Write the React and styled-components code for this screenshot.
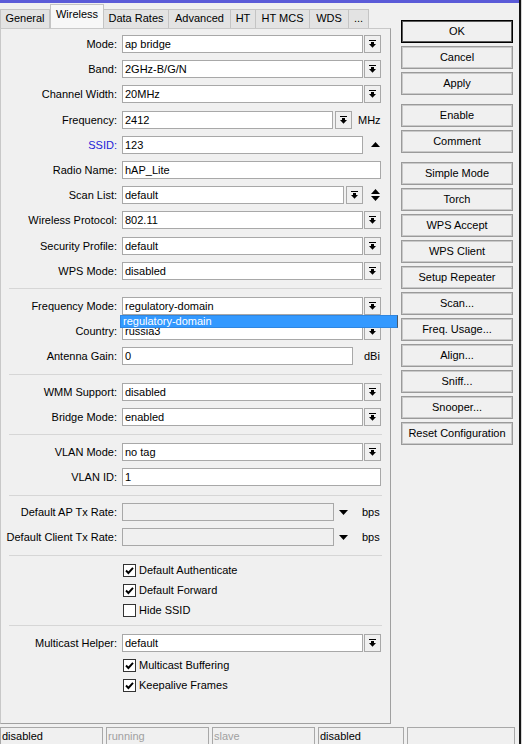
import React from "react";
import styled, { createGlobalStyle } from "styled-components";

const GlobalStyle = createGlobalStyle`
  html, body {
    margin: 0;
    padding: 0;
    background: #f0f0f0;
  }
  body {
    font-family: "Liberation Sans", Arial, sans-serif;
    font-size: 11px;
    color: #000;
  }
`;

const Screen = styled.div`
  display: flex;
  width: 522px;
  height: 744px;
  overflow: hidden;
`;

const Window = styled.div`
  width: 519px;
  display: flex;
  flex-direction: column;
  background: #f0f0f0;
`;

const TitleStrip = styled.div`
  height: 3px;
  flex-shrink: 0;
  background: #5b5bd8;
`;

const Edge = styled.div`
  width: 3px;
  box-sizing: border-box;
  border-left: 2px solid #141414;
  background: #d6d6d6;
`;

const Main = styled.div`
  display: flex;
  flex: 1;
  min-height: 0;
`;

const Left = styled.div`
  width: 391px;
  display: flex;
  flex-direction: column;
`;

const TabBar = styled.div`
  height: 25px;
  flex-shrink: 0;
  display: flex;
  align-items: flex-end;
`;

const Tab = styled.div`
  box-sizing: border-box;
  width: ${p => p.$w}px;
  height: ${p => (p.$active ? 24 : 19)}px;
  padding-top: ${p => (p.$active ? 3 : 2)}px;
  text-align: center;
  border: 1px solid #c4c4c4;
  border-bottom: none;
  border-left-width: ${p => (p.$first || p.$active ? 1 : 0)}px;
  background: ${p => (p.$active ? "#f7f7f7" : "#e3e3e3")};
  white-space: nowrap;
`;

const Panel = styled.div`
  flex: 1;
  box-sizing: border-box;
  border-top: 1px solid #c8c8c8;
  border-left: 1px solid #c8c8c8;
  border-right: 1px solid #a0a0a0;
  border-bottom: 1px solid #a0a0a0;
  padding-top: 2.5px;
`;

const RowBox = styled.div`
  display: flex;
  align-items: center;
  height: 25.2px;
`;

const Label = styled.div`
  width: 116px;
  text-align: right;
  white-space: nowrap;
  color: ${p => (p.$blue ? "#2323d8" : "#000")};
`;

const Control = styled.div`
  position: relative;
  margin-left: 5px;
  width: 259px;
  height: 18px;
  display: flex;
  align-items: center;
`;

const Input = styled.div`
  flex: 1;
  box-sizing: border-box;
  height: 18px;
  line-height: 16px;
  padding-left: 2px;
  border: 1px solid #a8a8a8;
  background: ${p => (p.$disabled ? "#f0f0f0" : "#fff")};
  white-space: nowrap;
  overflow: hidden;
`;

const DropBtn = styled.div`
  box-sizing: border-box;
  width: 17px;
  height: 18px;
  margin-left: ${p => p.$ml ?? 1}px;
  border: 1px solid #a8a8a8;
  background: #f0f0f0;
  display: flex;
  align-items: center;
  justify-content: center;
`;

const IconBox = styled.div`
  width: 18px;
  height: 18px;
  display: flex;
  align-items: center;
  justify-content: ${p => p.$end ? "flex-end" : "center"};
  padding-right: ${p => p.$end ? 1 : 0}px;
  box-sizing: border-box;
`;

const Unit = styled.div`
  width: ${p => p.$w}px;
  box-sizing: border-box;
  padding-left: ${p => p.$pl}px;
  white-space: nowrap;
`;

const Popup = styled.div`
  position: absolute;
  z-index: 5;
  top: 18px;
  left: -2px;
  width: 278px;
  height: 13px;
  box-sizing: border-box;
  line-height: 11px;
  padding-left: 2px;
  background: #3399ff;
  border: 1px solid #2f86e0;
  border-right-color: #4a5a6a;
  color: #fff;
`;

const Separator = styled.div`
  height: 10px;
  box-sizing: border-box;
  margin: 0 8px;
  padding-top: 5px;
  &::after {
    content: "";
    display: block;
    border-top: 1px solid #d6d6d6;
  }
`;

const CheckRow = styled.div`
  display: flex;
  align-items: center;
  height: 20px;
  padding-left: 122px;
`;

const Box = styled.div`
  box-sizing: border-box;
  width: 13px;
  height: 13px;
  border: 1px solid #333;
  background: #fff;
  margin-right: 3px;
  display: flex;
  align-items: center;
  justify-content: center;
`;

const Side = styled.div`
  width: 112px;
  margin-left: 10px;
  padding-top: 17px;
  display: flex;
  flex-direction: column;
`;

const Button = styled.div`
  box-sizing: border-box;
  height: 23px;
  margin-top: ${p => p.$mt}px;
  line-height: 21px;
  text-align: center;
  background: #f0f0f0;
  border: 1px solid ${p => (p.$default ? "#000" : "#9a9a9a")};
  box-shadow: inset 0 0 0 1px ${p => (p.$default ? "#5a5a5a" : "#c9c9c9")};
  white-space: nowrap;
`;

const StatusBar = styled.div`
  height: 17px;
  margin-top: 3px;
  flex-shrink: 0;
  display: flex;
  gap: 3px;
`;

const Segment = styled.div`
  width: ${p => p.$w}px;
  box-sizing: border-box;
  border: 1px solid #a8a8a8;
  border-bottom: none;
  padding-left: 1px;
  line-height: 16px;
  color: ${p => (p.$dim ? "#a0a0a0" : "#000")};
`;

const DropIcon = () => (
  <svg width="7" height="8" viewBox="0 0 7 8">
    <rect x="0" y="0" width="7" height="1" fill="#000" />
    <rect x="2" y="2" width="3" height="2" fill="#000" />
    <polygon points="0,4 7,4 3.5,7.8" fill="#000" />
  </svg>
);

const UpIcon = () => (
  <svg width="9" height="5" viewBox="0 0 9 5">
    <polygon points="0,5 9,5 4.5,0" fill="#000" />
  </svg>
);

const DownIcon = () => (
  <svg width="9" height="5" viewBox="0 0 9 5">
    <polygon points="0,0 9,0 4.5,5" fill="#000" />
  </svg>
);

const UpDownIcon = () => (
  <svg width="9" height="12" viewBox="0 0 9 12">
    <polygon points="0,5 9,5 4.5,0" fill="#000" />
    <polygon points="0,7 9,7 4.5,12" fill="#000" />
  </svg>
);

const CheckMark = () => (
  <svg width="9" height="9" viewBox="0 0 9 9">
    <path d="M1 4.5 L3.4 7 L8 1.8" stroke="#000" strokeWidth="1.9" fill="none" />
  </svg>
);

function Row({ label, blue, children }) {
  return (
    <RowBox>
      <Label $blue={blue}>{label}:</Label>
      <Control>{children}</Control>
    </RowBox>
  );
}

function Select({ value }) {
  return (
    <>
      <Input>{value}</Input>
      <DropBtn><DropIcon /></DropBtn>
    </>
  );
}

function Check({ label, checked }) {
  return (
    <CheckRow>
      <Box>{checked && <CheckMark />}</Box>
      {label}
    </CheckRow>
  );
}

const tabs = [
  ["General", 50],
  ["Wireless", 54, true],
  ["Data Rates", 65],
  ["Advanced", 62],
  ["HT", 25],
  ["HT MCS", 54],
  ["WDS", 39],
  ["...", 20],
];

const buttons = [
  ["OK", 0, true],
  ["Cancel", 3],
  ["Apply", 3],
  ["Enable", 9],
  ["Comment", 3],
  ["Simple Mode", 9],
  ["Torch", 3],
  ["WPS Accept", 3],
  ["WPS Client", 3],
  ["Setup Repeater", 3],
  ["Scan...", 3],
  ["Freq. Usage...", 3],
  ["Align...", 3],
  ["Sniff...", 3],
  ["Snooper...", 3],
  ["Reset Configuration", 3],
];

export default function App() {
  return (
    <Screen>
      <GlobalStyle />
      <Window>
        <TitleStrip />
        <Main>
          <Left>
            <TabBar>
              {tabs.map(([name, w, active], i) => (
                <Tab key={name} $w={w} $active={active} $first={i === 0}>{name}</Tab>
              ))}
            </TabBar>
            <Panel>
              <Row label="Mode"><Select value="ap bridge" /></Row>
              <Row label="Band"><Select value="2GHz-B/G/N" /></Row>
              <Row label="Channel Width"><Select value="20MHz" /></Row>
              <Row label="Frequency">
                <Input>2412</Input>
                <DropBtn $ml={2}><DropIcon /></DropBtn>
                <Unit $w={29} $pl={6}>MHz</Unit>
              </Row>
              <Row label="SSID" blue>
                <Input>123</Input>
                <IconBox $end><UpIcon /></IconBox>
              </Row>
              <Row label="Radio Name"><Input>hAP_Lite</Input></Row>
              <Row label="Scan List">
                <Input>default</Input>
                <DropBtn $ml={2}><DropIcon /></DropBtn>
                <IconBox $end><UpDownIcon /></IconBox>
              </Row>
              <Row label="Wireless Protocol"><Select value="802.11" /></Row>
              <Row label="Security Profile"><Select value="default" /></Row>
              <Row label="WPS Mode"><Select value="disabled" /></Row>
              <Separator />
              <Row label="Frequency Mode">
                <Select value="regulatory-domain" />
                <Popup>regulatory-domain</Popup>
              </Row>
              <Row label="Country"><Select value="russia3" /></Row>
              <Row label="Antenna Gain">
                <Input>0</Input>
                <Unit $w={28} $pl={11}>dBi</Unit>
              </Row>
              <Separator />
              <Row label="WMM Support"><Select value="disabled" /></Row>
              <Row label="Bridge Mode"><Select value="enabled" /></Row>
              <Separator />
              <Row label="VLAN Mode"><Select value="no tag" /></Row>
              <Row label="VLAN ID"><Input>1</Input></Row>
              <Separator />
              <Row label="Default AP Tx Rate">
                <Input $disabled />
                <IconBox><DownIcon /></IconBox>
                <Unit $w={29} $pl={10}>bps</Unit>
              </Row>
              <Row label="Default Client Tx Rate">
                <Input $disabled />
                <IconBox><DownIcon /></IconBox>
                <Unit $w={29} $pl={10}>bps</Unit>
              </Row>
              <Separator />
              <Check label="Default Authenticate" checked />
              <Check label="Default Forward" checked />
              <Check label="Hide SSID" />
              <Separator />
              <Row label="Multicast Helper"><Select value="default" /></Row>
              <Check label="Multicast Buffering" checked />
              <Check label="Keepalive Frames" checked />
            </Panel>
          </Left>
          <Side>
            {buttons.map(([name, mt, def]) => (
              <Button key={name} $mt={mt} $default={def}>{name}</Button>
            ))}
          </Side>
        </Main>
        <StatusBar>
          <Segment $w={103}>disabled</Segment>
          <Segment $w={103} $dim>running</Segment>
          <Segment $w={103} $dim>slave</Segment>
          <Segment $w={86}>disabled</Segment>
          <Segment $w={108} />
        </StatusBar>
      </Window>
      <Edge />
    </Screen>
  );
}
